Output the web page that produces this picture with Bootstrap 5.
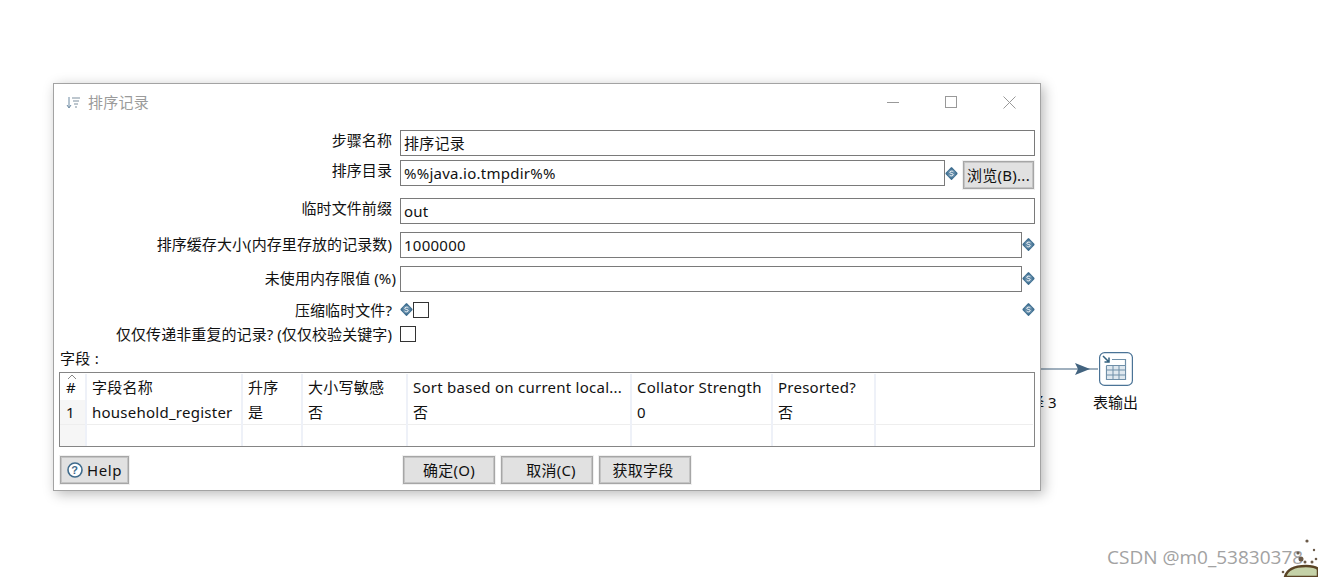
<!DOCTYPE html>
<html lang="zh">
<head>
<meta charset="utf-8">
<title>排序记录</title>
<link href="https://cdn.jsdelivr.net/npm/bootstrap@5.3.0/dist/css/bootstrap.min.css" rel="stylesheet">
<style>
html,body{height:100%;}
body{background:#fff;color:#111;font-family:"Noto Sans","Noto Sans CJK SC",sans-serif;font-size:15px;letter-spacing:.25px;overflow:hidden;position:relative;}
.canvas-line{position:absolute;left:1000px;top:360px;}
.canvas-icon{position:absolute;left:1099px;top:352px;}
.canvas-label{position:absolute;white-space:nowrap;font-size:15px;line-height:18px;color:#111;letter-spacing:0;}
.lbl-a{left:984px;top:393px;}
.lbl-b{left:1093px;top:393px;}
.wm{position:absolute;left:1107px;top:544px;font-family:"Open Sans",sans-serif;font-size:19px;line-height:26px;color:#a2a2a2;white-space:nowrap;letter-spacing:0;}
.blob{position:absolute;left:1270px;top:535px;}
.dlg{position:absolute;left:53px;top:83px;width:988px;height:408px;background:#fff;border:1px solid #a3a3a3;box-shadow:3px 3px 12px rgba(0,0,0,.28);padding-right:5px;}
.dlg-title{height:37px;color:#9b9b9b;padding-left:12px;}
.dlg-title .tt{margin-left:8px;}
.winctl{width:148px;}
.winctl svg{display:block;}
.closeic{margin-right:19px;}
.frow{display:flex;align-items:flex-start;height:26px;}
.frow-first{margin-top:9px;}
.frow-dir{margin-top:4px;height:30px;}
.frow-m8{margin-top:8px;}
.frow-chk{height:16px;}
.frow-m10{margin-top:10px;}
.flabel{width:338px;flex:none;text-align:right;line-height:20px;margin-right:8px;white-space:nowrap;letter-spacing:.08px;}
.flabel-mid{line-height:24px;}
.flabel-wide{width:342px;margin-right:4px;}
.flabel-chk{line-height:16px;}
.inp{height:26px;border:1px solid #7a7a7a;background:#fff;padding:0 3px;line-height:25px;flex:1 1 auto;min-width:0;}
.varic{flex:none;display:block;}
.varic-dir{margin:6px 5px 0 0;}
.varic-side{margin-top:5px;}
.gbtn{background:#e1e1e1;border:1px solid #a6a6a6;box-shadow:inset 0 0 0 1px #c4c4c4;outline:1px solid #f0f0f0;border-radius:0;padding:0;color:#111;font-size:15px;letter-spacing:.25px;line-height:24px;height:28px;}
.gbtn:hover{background:#e1e1e1;color:#111;border-color:#a6a6a6;}
.browse{width:71px;margin:1px 1px 0 0;}
.chk{width:16px;height:16px;border:1px solid #333;background:#fff;flex:none;display:block;}
.sec-label{padding-left:6px;line-height:20px;margin-top:6px;}
.gridbox{margin-left:5px;margin-top:4px;height:75px;border:1px solid #858585;padding:1px 1px 1px 0;overflow:hidden;}
.gt{table-layout:fixed;width:100%;border-collapse:collapse;}
.gt th,.gt td{font-weight:400;padding:0 0 0 5px;white-space:nowrap;overflow:hidden;vertical-align:middle;border-right:2px solid #eef1f8;}
.gt th:last-child,.gt td:last-child{border-right:0;}
.gt thead th{height:26px;padding-top:1px;}
.gt tbody td{height:23px;border-bottom:1px solid #eee;padding-top:1px;}
.gt tbody tr:last-child td{height:22px;border-bottom:0;}
.gt .idx{background:#f6f6f6;padding-left:6px;}
.gt thead .idx{background:#fff;position:relative;}
.sortc{position:absolute;left:6px;top:0;}
.foot{padding:9px 0 0 6px;position:relative;}
.help{width:69px;letter-spacing:.6px;}
.act{width:92px;}
.act-group{margin-left:274px;gap:6px;}
.shift-r{padding-left:8px;}
.shift-l{padding-right:4px;}
</style>
</head>
<body>
<svg width="0" height="0" class="d-block position-absolute"><defs><g id="vi"><path d="M6.5 1.2Q6.5 .8 7 1.3L12.3 6.8Q12.9 7.5 12.3 8.2L7 13.7Q6.5 14.2 6 13.7L.7 8.2Q.1 7.5 .7 6.8L6 1.3Z" fill="#3e6e90"/><circle cx="6.5" cy="7.5" r="4" fill="#5f88a6"/><path d="M8.4 5.8C7.6 4.7 4.7 4.9 4.8 6.4C5 8 8.3 7 8.2 8.7C8 10.2 5.3 10.1 4.6 9.1" fill="none" stroke="#fff" stroke-width="1"/></g></defs></svg>
<svg class="canvas-line" width="100" height="20" viewBox="0 0 100 20"><path d="M0 9H98" stroke="#42637f" stroke-width="1.2"/><path d="M75 3L90 9L75 15L78 9Z" fill="#42637f"/></svg>
<svg class="canvas-icon" width="34" height="34" viewBox="0 0 34 34"><rect x=".6" y=".6" width="32.8" height="32.8" rx="5" fill="#fff" stroke="#4a7396" stroke-width="1.2"/><path d="M13 7.5H26.5V27.5H7.500V14" fill="none" stroke="#6f8fa8" stroke-width="1.2"/><path d="M7.500 13.500H26.500V27.500H7.500Z" fill="#dfe8ef" stroke="#6f8fa8"/><path d="M7.500 18H26.500M7.500 23H26.500M14 13.500V27.500M20 13.500V27.500" stroke="#6f8fa8"/><path d="M4 4L10 10M10 5.500V10H5.500" fill="none" stroke="#33617f" stroke-width="1.500"/></svg>
<div class="canvas-label lbl-a">字段选择 3</div>
<div class="canvas-label lbl-b">表输出</div>
<div class="wm">CSDN @m0_53830378</div>
<svg class="blob" width="48" height="42" viewBox="0 0 48 42"><path d="M15 42C17 34 26 31 36 31C42 31 46 32 48 34V42Z" fill="#c5d2a8" stroke="#5a4425" stroke-width="2.500"/><g fill="#6b5a48"><circle cx="37" cy="6" r="1.600"/><circle cx="31" cy="24" r="2.500"/><circle cx="35" cy="27" r="1.500"/><circle cx="13" cy="37" r="1.300"/><circle cx="44" cy="15" r="1.200"/><circle cx="28" cy="18" r="1.600"/><circle cx="42" cy="27" r="1.500"/><circle cx="46" cy="24" r="1.300"/></g></svg>

<div class="dlg">
  <div class="dlg-title d-flex align-items-center">
    <svg width="14" height="12" viewBox="0 0 14 12"><path d="M3 0V10M1 8L3 11L5 8" fill="none" stroke="#6c8aa3" stroke-width="1"/><path d="M6 1H14M7 4H13M8 7H12M9 10H11" stroke="#7d8f9e" stroke-width="1"/></svg>
    <span class="tt">排序记录</span>
    <div class="winctl ms-auto d-flex">
      <svg width="13" height="13" viewBox="0 0 13 13" class="me-auto"><path d="M0 6.500H12" stroke="#999"/></svg>
      <svg width="13" height="13" viewBox="0 0 13 13" class="me-auto"><rect x=".5" y=".5" width="11" height="11" fill="none" stroke="#999"/></svg>
      <svg width="13" height="13" viewBox="0 0 13 13" class="closeic"><path d="M.5 .5L12.500 12.500M12.500 .5L.5 12.500" stroke="#999"/></svg>
    </div>
  </div>
  <div class="frow frow-first"><div class="flabel">步骤名称</div><div class="inp">排序记录</div></div>
  <div class="frow frow-dir"><div class="flabel">排序目录</div><div class="inp">%%java.io.tmpdir%%</div>
    <svg class="varic varic-dir" width="13" height="15" viewBox="0 0 13 15"><use href="#vi"/></svg>
    <button type="button" class="btn gbtn browse">浏览(B)...</button></div>
  <div class="frow frow-m8"><div class="flabel">临时文件前缀</div><div class="inp">out</div></div>
  <div class="frow frow-m8"><div class="flabel flabel-mid">排序缓存大小(内存里存放的记录数)</div><div class="inp">1000000</div>
    <svg class="varic varic-side" width="13" height="15" viewBox="0 0 13 15"><use href="#vi"/></svg></div>
  <div class="frow frow-m8"><div class="flabel flabel-mid flabel-wide">未使用内存限值 (%)</div><div class="inp"></div>
    <svg class="varic varic-side" width="13" height="15" viewBox="0 0 13 15"><use href="#vi"/></svg></div>
  <div class="frow frow-chk frow-m10"><div class="flabel flabel-chk">压缩临时文件?</div>
    <svg class="varic" width="13" height="15" viewBox="0 0 13 15"><use href="#vi"/></svg>
    <span class="chk"></span>
    <svg class="varic ms-auto" width="13" height="15" viewBox="0 0 13 15"><use href="#vi"/></svg></div>
  <div class="frow frow-chk frow-m8"><div class="flabel flabel-chk">仅仅传递非重复的记录? (仅仅校验关键字)</div><span class="chk"></span></div>
  <div class="sec-label">字段 :</div>
  <div class="gridbox">
    <table class="gt">
      <colgroup><col style="width:26px"><col style="width:156px"><col style="width:60px"><col style="width:105px"><col style="width:224px"><col style="width:141px"><col style="width:103px"><col></colgroup>
      <thead><tr><th class="idx"><svg class="sortc" width="12" height="6" viewBox="0 0 12 6"><path d="M2 5L6 1L10 5" fill="none" stroke="#888"/></svg>#</th><th>字段名称</th><th>升序</th><th>大小写敏感</th><th>Sort based on current local...</th><th>Collator Strength</th><th>Presorted?</th><th></th></tr></thead>
      <tbody>
        <tr><td class="idx">1</td><td>household_register</td><td>是</td><td>否</td><td>否</td><td>0</td><td>否</td><td></td></tr>
        <tr><td class="idx"></td><td></td><td></td><td></td><td></td><td></td><td></td><td></td></tr>
      </tbody>
    </table>
  </div>
  <div class="foot d-flex align-items-start">
    <button type="button" class="btn gbtn help d-flex align-items-center justify-content-center gap-1"><svg width="16" height="16" viewBox="0 0 16 16"><circle cx="8" cy="8" r="7" fill="#fff" stroke="#3f6b8c" stroke-width="1.600"/><text x="8" y="12" text-anchor="middle" font-size="11" font-weight="700" fill="#3f6b8c" font-family="Liberation Sans,sans-serif">?</text></svg>Help</button>
    <div class="act-group d-flex">
      <button type="button" class="btn gbtn act">确定(O)</button>
      <button type="button" class="btn gbtn act shift-r">取消(C)</button>
      <button type="button" class="btn gbtn act shift-l">获取字段</button>
    </div>
  </div>
</div>
<script src="https://cdn.jsdelivr.net/npm/bootstrap@5.3.0/dist/js/bootstrap.bundle.min.js"></script>
</body>
</html>
